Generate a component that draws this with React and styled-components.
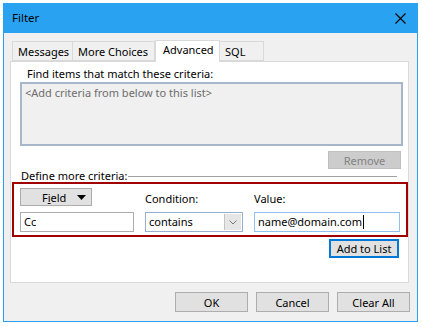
import React from 'react';
import styled, { createGlobalStyle } from 'styled-components';

const GlobalStyle = createGlobalStyle`
  html, body {
    margin: 0;
    padding: 0;
    background: #ffffff;
  }
  body {
    font-family: "Noto Sans", "Liberation Sans", sans-serif;
    font-size: 11px;
    color: #000000;
  }
`;

const Window = styled.div`
  margin: 3px 0 0 3px;
  width: 415px;
  height: 319px;
  box-sizing: border-box;
  border: 1px solid #2a9ef0;
  border-top: none;
  background: #f0f0f0;
  display: flex;
  flex-direction: column;
`;

const TitleBar = styled.div`
  height: 30px;
  margin: 0 -1px;
  background: #29a3f1;
  display: flex;
  align-items: center;
  justify-content: space-between;
  padding: 0 12px 0 9px;
`;

const Caption = styled.span`
  font-size: 11.5px;
  line-height: 16px;
`;

const Body = styled.div`
  flex: 1;
  display: flex;
  flex-direction: column;
  padding: 7px 8px 0 6px;
`;

const TabRow = styled.div`
  display: flex;
  align-items: flex-end;
  height: 21px;
  padding-left: 2px;
  position: relative;
  z-index: 1;
`;

const Tab = styled.div`
  height: ${(p) => (p.$active ? '22px' : '20px')};
  box-sizing: border-box;
  padding: 0 ${(p) => (p.$active ? '7px' : '5px')};
  margin-bottom: ${(p) => (p.$active ? '-1px' : '0')};
  border: 1px solid #d9d9d9;
  border-bottom: ${(p) => (p.$active ? 'none' : '1px solid #d9d9d9')};
  border-left: ${(p) => (p.$first || p.$active ? '1px solid #d9d9d9' : 'none')};
  background: ${(p) => (p.$active ? '#ffffff' : '#f0f0f0')};
  line-height: ${(p) => (p.$active ? '18px' : '20px')};
  width: ${(p) => p.$w}px;
  text-align: ${(p) => (p.$active ? 'center' : 'left')};
  white-space: nowrap;
`;

const Panel = styled.div`
  height: 222px;
  box-sizing: border-box;
  border: 1px solid #d9d9d9;
  background: #ffffff;
  display: flex;
  flex-direction: column;
  padding: 4px 5px 0 9px;
`;

const Label = styled.div`
  line-height: 16px;
  margin-left: ${(p) => p.$indent || 0}px;
  white-space: nowrap;
`;

const ListBox = styled.div`
  height: 64px;
  box-sizing: border-box;
  border: 2px solid #a8b6c9;
  background: #f0f0f0;
  color: #6d6d6d;
  padding: 0 3px;
  line-height: 18px;
`;

const Button = styled.button`
  font-family: inherit;
  font-size: 11px;
  width: ${(p) => p.$w}px;
  height: ${(p) => p.$h || 20}px;
  box-sizing: border-box;
  padding: 0;
  background: ${(p) => (p.$disabled ? '#cccccc' : '#e1e1e1')};
  color: ${(p) => (p.$disabled ? '#838383' : '#000000')};
  border: ${(p) => (p.$focus ? '2px solid #0078d7' : p.$disabled ? '1px solid #bfbfbf' : '1px solid #adadad')};
  border-radius: 0;
  align-self: flex-end;
  margin-right: ${(p) => p.$mr || 0}px;
  margin-top: ${(p) => p.$mt || 0}px;
  display: flex;
  align-items: center;
  justify-content: center;
`;

const SectionTitle = styled.div`
  display: flex;
  align-items: center;
  gap: 1px;
  margin: 1px 6px 0 1px;
  line-height: 12px;
`;

const Rule = styled.div`
  flex: 1;
  height: 1px;
  background: #a0a0a0;
  margin-top: 1px;
`;

const Highlight = styled.div`
  margin: 0 -5px 0 -8px;
  height: 55px;
  box-sizing: border-box;
  border: 2px solid #a00000;
  display: grid;
  grid-template-columns: 114px 98px 146px;
  grid-template-rows: 24px 20px;
  column-gap: 11px;
  row-gap: 0;
  padding: 4px 0 0 6px;
  align-items: end;
`;

const FieldButton = styled.div`
  width: 72px;
  height: 18px;
  box-sizing: border-box;
  background: #e1e1e1;
  border: 1px solid #adadad;
  display: flex;
  align-items: center;
  justify-content: space-between;
  padding: 0 5px 0 21px;
  align-self: start;

  u {
    text-decoration: underline;
    text-underline-offset: 1px;
  }
`;

const ColumnLabel = styled.div`
  line-height: 16px;
  padding-bottom: 5px;
`;

const TextBox = styled.div`
  height: 20px;
  box-sizing: border-box;
  border: 1px solid ${(p) => (p.$focus ? '#8ec1ee' : '#acacac')};
  background: #ffffff;
  padding: 0 3px;
  line-height: 18px;
  display: flex;
  align-items: center;
`;

const Caret = styled.span`
  display: inline-block;
  width: 1px;
  height: 14px;
  background: #000000;
  margin-left: 1px;
`;

const Combo = styled.div`
  height: 20px;
  box-sizing: border-box;
  border: 1px solid #98b0d0;
  background: #ffffff;
  display: flex;
  padding: 1px;
`;

const ComboText = styled.div`
  flex: 1;
  line-height: 16px;
  padding-left: 2px;
`;

const ComboArrow = styled.div`
  width: 16px;
  background: #e6e6e6;
  border-left: 1px solid #c4c4c4;
  display: flex;
  align-items: center;
  justify-content: center;
`;

const Footer = styled.div`
  display: flex;
  justify-content: flex-end;
  gap: 8px;
  padding: 9px 0 0 0;
  margin-right: -1px;
`;

const CloseIcon = () => (
  <svg width="11" height="11" viewBox="0 0 11 11">
    <path d="M0.5 0.5 L10.5 10.5 M10.5 0.5 L0.5 10.5" stroke="#000" strokeWidth="1.1" fill="none" />
  </svg>
);

const Triangle = () => (
  <svg width="9" height="5" viewBox="0 0 9 5">
    <path d="M0 0 H9 L4.5 5 Z" fill="#000" />
  </svg>
);

const Chevron = () => (
  <svg width="8" height="5" viewBox="0 0 8 5">
    <path d="M0.5 0.5 L4 4 L7.5 0.5" stroke="#7a7a7a" strokeWidth="1" fill="none" />
  </svg>
);

export default function App() {
  return (
    <>
      <GlobalStyle />
      <Window>
        <TitleBar>
          <Caption>Filter</Caption>
          <CloseIcon />
        </TitleBar>
        <Body>
          <TabRow>
            <Tab $first $w={61}>Messages</Tab>
            <Tab $w={82}>More Choices</Tab>
            <Tab $active $w={65}>Advanced</Tab>
            <Tab $w={44}>SQL</Tab>
          </TabRow>
          <Panel>
            <Label $indent={7}>Find items that match these criteria:</Label>
            <ListBox>&lt;Add criteria from below to this list&gt;</ListBox>
            <Button $disabled $w={73} $h={18} $mr={2} $mt={5}>Remove</Button>
            <SectionTitle>
              <span>Define more criteria:</span>
              <Rule />
            </SectionTitle>
            <Highlight>
              <FieldButton>
                <span>F<u>i</u>eld</span>
                <Triangle />
              </FieldButton>
              <ColumnLabel>Condition:</ColumnLabel>
              <ColumnLabel>Value:</ColumnLabel>
              <TextBox>Cc</TextBox>
              <Combo>
                <ComboText>contains</ComboText>
                <ComboArrow>
                  <Chevron />
                </ComboArrow>
              </Combo>
              <TextBox $focus>
                name@domain.com
                <Caret />
              </TextBox>
            </Highlight>
            <Button $focus $w={70} $h={19} $mr={4} $mt={2}>Add to List</Button>
          </Panel>
          <Footer>
            <Button $w={73}>OK</Button>
            <Button $w={73}>Cancel</Button>
            <Button $w={73}>Clear All</Button>
          </Footer>
        </Body>
      </Window>
    </>
  );
}
